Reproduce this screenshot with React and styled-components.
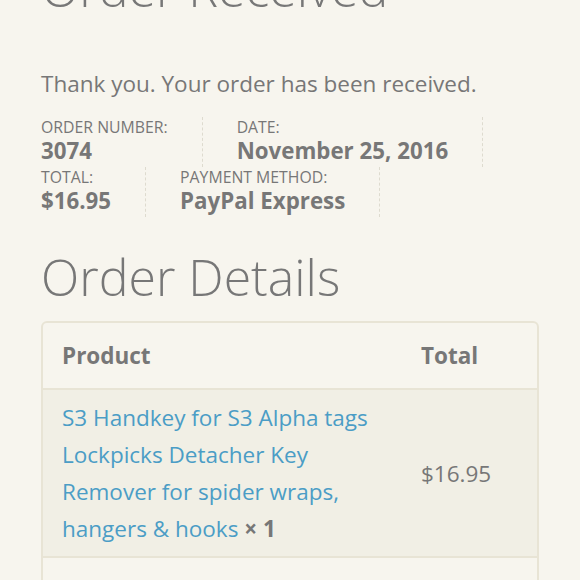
import React from "react";
import styled, { createGlobalStyle } from "styled-components";

const GlobalStyle = createGlobalStyle`
  html, body {
    margin: 0;
    padding: 0;
    background: #f7f5ee;
  }
  body {
    font-family: "Open Sans", "Noto Sans", sans-serif;
    color: #777;
    overflow: hidden;
  }
`;

const Page = styled.div`
  width: 580px;
  height: 580px;
  padding: 0 41px;
  box-sizing: border-box;
  overflow: hidden;
`;

const Title = styled.h1`
  margin: -44px 0 0;
  font-size: 50px;
  font-weight: 300;
  line-height: 64px;
  color: #777;
`;

const Notice = styled.p`
  margin: 48px 0 17px;
  font-size: 22.5px;
  line-height: 32px;
  color: #777;
`;

const Overview = styled.ul`
  display: flex;
  flex-wrap: wrap;
  margin: 0;
  padding: 0;
  list-style: none;
`;

const OverviewItem = styled.li`
  margin-right: 34px;
  padding-right: 34px;
  padding-bottom: 2px;
  border-right: 1px dashed #dedbcf;
  font-size: 15.8px;
  line-height: 20px;
  text-transform: uppercase;
  color: #777;
`;

const OverviewValue = styled.strong`
  display: block;
  font-size: 22.3px;
  line-height: 28px;
  font-weight: 700;
  text-transform: none;
`;

const SectionTitle = styled.h2`
  margin: 28px 0 12px;
  font-size: 50px;
  font-weight: 300;
  line-height: 64px;
  color: #777;
`;

const Table = styled.table`
  width: 498px;
  border-collapse: separate;
  border-spacing: 0;
  border: 2px solid #e8e4d5;
  border-radius: 6px;
  font-size: 22.5px;
`;

const HeadCell = styled.th`
  padding: 14px 19px;
  text-align: left;
  font-weight: 700;
  line-height: 37px;
  color: #777;
  border-bottom: 2px solid #e8e4d5;
  width: ${({ $w }) => $w || "auto"};
`;

const Row = styled.tr`
  background: ${({ $shade }) => ($shade ? "#f1efe5" : "transparent")};
`;

const Cell = styled.td`
  padding: 9px 19px;
  line-height: 37px;
  vertical-align: middle;
  color: #777;
  border-bottom: ${({ $last }) => ($last ? "none" : "2px solid #e8e4d5")};
`;

const ProductLink = styled.a`
  color: #4b9dc6;
  text-decoration: none;
`;

const Qty = styled.strong`
  font-weight: 700;
  color: #777;
`;

export default function App() {
  return (
    <Page>
      <GlobalStyle />
      <Title>Order Received</Title>
      <Notice>Thank you. Your order has been received.</Notice>
      <Overview>
        <OverviewItem>
          Order Number:
          <OverviewValue>3074</OverviewValue>
        </OverviewItem>
        <OverviewItem>
          Date:
          <OverviewValue>November 25, 2016</OverviewValue>
        </OverviewItem>
        <OverviewItem>
          Total:
          <OverviewValue>$16.95</OverviewValue>
        </OverviewItem>
        <OverviewItem>
          Payment Method:
          <OverviewValue>PayPal Express</OverviewValue>
        </OverviewItem>
      </Overview>
      <SectionTitle>Order Details</SectionTitle>
      <Table>
        <thead>
          <tr>
            <HeadCell $w="321px">Product</HeadCell>
            <HeadCell>Total</HeadCell>
          </tr>
        </thead>
        <tbody>
          <Row $shade>
            <Cell>
              <ProductLink href="#">
                S3 Handkey for S3 Alpha tags Lockpicks Detacher Key Remover for spider wraps, hangers &amp; hooks
              </ProductLink>{" "}
              <Qty>× 1</Qty>
            </Cell>
            <Cell>$16.95</Cell>
          </Row>
          <Row>
            <Cell $last>&nbsp;</Cell>
            <Cell $last>&nbsp;</Cell>
          </Row>
        </tbody>
      </Table>
    </Page>
  );
}
